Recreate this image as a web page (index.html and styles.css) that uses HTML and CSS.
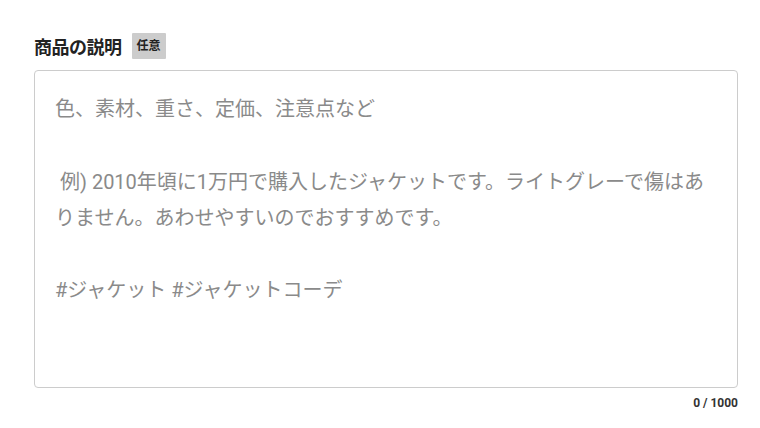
FILE: index.html
```html
<!DOCTYPE html>
<html lang="ja">
<head>
<meta charset="utf-8">
<link rel="stylesheet" href="styles.css">
</head>
<body>
<div class="field">
  <div class="label-row">
    <span class="label">商品の説明</span>
    <span class="badge">任意</span>
  </div>
  <div class="textarea"><span class="ph">色、素材、重さ、定価、注意点など

 例) 2010年頃に1万円で購入したジャケットです。ライトグレーで傷はありません。あわせやすいのでおすすめです。

#ジャケット #ジャケットコーデ</span></div>
  <div class="counter">0 / 1000</div>
</div>
</body>
</html>
```
FILE: styles.css
```css
html, body {
  margin: 0;
  padding: 0;
  background: #fff;
}
body {
  font-family: Roboto, "Noto Sans CJK JP", sans-serif;
  color: #333;
}
.field {
  padding: 33px 22px 0 34px;
  display: flex;
  flex-direction: column;
}
.label-row {
  display: flex;
  align-items: center;
  gap: 10px;
  height: 26px;
}
.label {
  font-size: 18px;
  font-weight: bold;
  color: #222;
  letter-spacing: -0.5px;
}
.badge {
  background: #cccccc;
  color: #222;
  font-size: 12px;
  font-weight: bold;
  padding: 0 5px;
  height: 26px;
  line-height: 26px;
  border-radius: 1px;
}
.textarea {
  margin-top: 11px;
  height: 318px;
  box-sizing: border-box;
  border: 1px solid #cccccc;
  border-radius: 4px;
  padding: 20px 20px;
  font-size: 20px;
  line-height: 36.3px;
  white-space: pre-wrap;
}
.ph {
  color: #8a8a8a;
}
.counter {
  text-align: right;
  font-size: 12px;
  font-weight: bold;
  color: #333;
  margin-top: 8px;
}
```
